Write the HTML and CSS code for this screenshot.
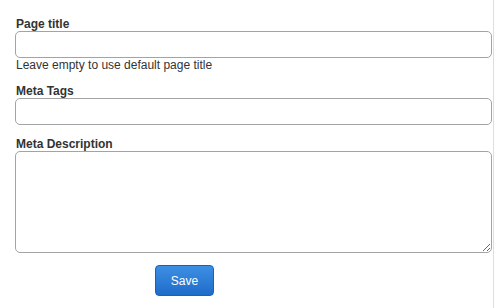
FILE: index.html
```html
<!DOCTYPE html>
<html lang="en">

<head>
  <meta charset="UTF-8">
  <title>Page Settings</title>
  <link rel="stylesheet" href="styles.css">
</head>

<body>
  <div class="page">
    <form class="settings-form">
      <div class="field">
        <label for="title">Page title</label>
        <input type="text" id="title">
        <div class="hint">Leave empty to use default page title</div>
      </div>
      <div class="field">
        <label for="tags">Meta Tags</label>
        <input type="text" id="tags">
      </div>
      <div class="field">
        <label for="desc">Meta Description</label>
        <textarea id="desc"></textarea>
      </div>
      <div class="actions">
        <button type="button" class="save-btn">Save</button>
      </div>
    </form>
  </div>
</body>

</html>
```

FILE: styles.css
```css
body {
  margin: 0;
  padding: 0;
  background-color: #fff;
  color: #333;
  font-family: "Liberation Sans", Arial, sans-serif;
  font-size: 12px;
}

.page {
  width: 494px;
  min-height: 308px;
  border-right: 1px solid #dedede;
  box-sizing: border-box;
}

.settings-form {
  padding: 17px 0 0 15px;
  width: 477px;
}

.field {
  margin-bottom: 12px;
}

.field label {
  display: block;
  font-weight: bold;
  line-height: 14px;
  height: 14px;
  padding-left: 1px;
  color: #333;
}

.field input,
.field textarea {
  display: block;
  width: 100%;
  box-sizing: border-box;
  border: 1px solid #a3a3a3;
  border-radius: 5px;
  margin: 0;
  padding: 4px 6px;
  font-family: inherit;
  font-size: 12px;
  background: #fff;
}

.field input {
  height: 27px;
}

.field textarea {
  height: 102px;
  resize: vertical;
}

.hint {
  line-height: 15px;
  padding-left: 1px;
  margin-bottom: -1px;
}

.actions {
  padding: 0 0 0 140px;
}

.save-btn {
  width: 59px;
  height: 31px;
  border: 1px solid #1c5fb4;
  border-radius: 4px;
  background: linear-gradient(#3d8fe4, #1f6cc9);
  color: #fff;
  font-family: inherit;
  font-size: 12px;
  cursor: pointer;
}
```
